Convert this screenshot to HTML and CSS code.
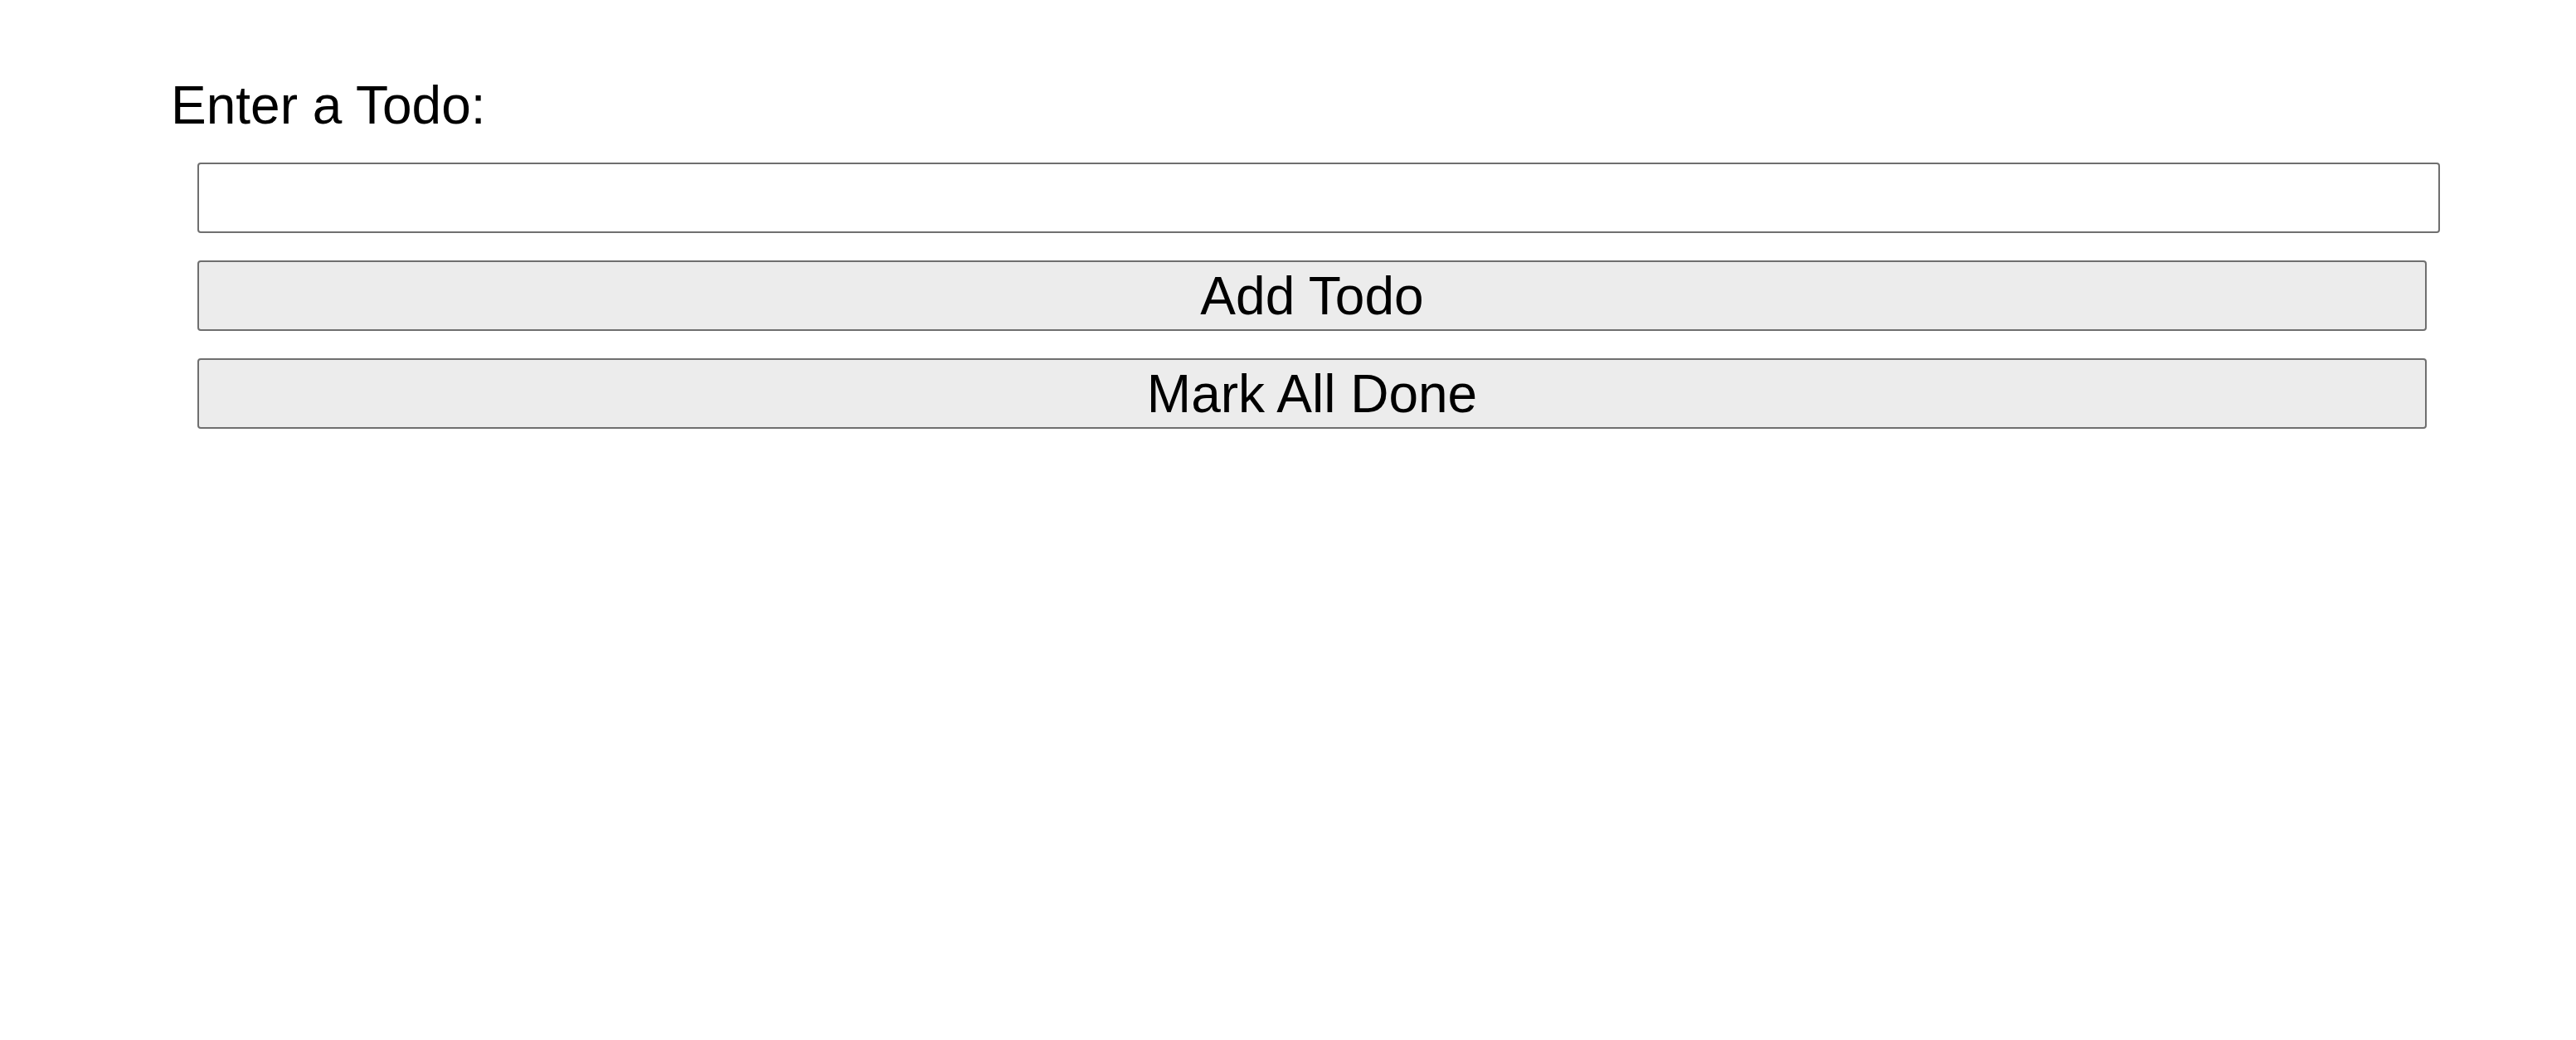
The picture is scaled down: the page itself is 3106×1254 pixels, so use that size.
FILE: index.html
```html
<!DOCTYPE html>
<html lang="en">
<head>
<meta charset="utf-8">
<title>Todo</title>
<link rel="stylesheet" href="styles.css">
</head>
<body>
<div class="page">
  <label class="label" for="todo">Enter a Todo:</label>
  <div class="form">
    <input class="todo-input" id="todo" type="text">
    <button class="btn" type="button">Add Todo</button>
    <button class="btn" type="button">Mark All Done</button>
  </div>
</div>
</body>
</html>
```

FILE: styles.css
```css
html, body {
  margin: 0;
  padding: 0;
  background: #ffffff;
}

.page {
  padding: 91px 0 0 206px;
  font-family: "Liberation Sans", Arial, Helvetica, sans-serif;
  color: #000;
}

.label {
  display: block;
  font-size: 64px;
  line-height: 72px;
}

.form {
  display: flex;
  flex-direction: column;
  align-items: flex-start;
  gap: 33px;
  margin: 33px 0 0 32px;
}

.todo-input {
  box-sizing: border-box;
  width: 2704px;
  height: 85px;
  margin: 0;
  padding: 0 8px;
  border: 2px solid #6f6f6f;
  border-radius: 4px;
  background: #fff;
  font-family: "Liberation Sans", Arial, sans-serif;
  font-size: 64px;
  outline: none;
}

.btn {
  box-sizing: border-box;
  width: 2688px;
  height: 85px;
  margin: 0;
  padding: 0;
  border: 2px solid #6f6f6f;
  border-radius: 4px;
  background: #ececec;
  color: #000;
  font-family: "Liberation Sans", Arial, sans-serif;
  font-size: 64px;
  line-height: 1;
}
```
